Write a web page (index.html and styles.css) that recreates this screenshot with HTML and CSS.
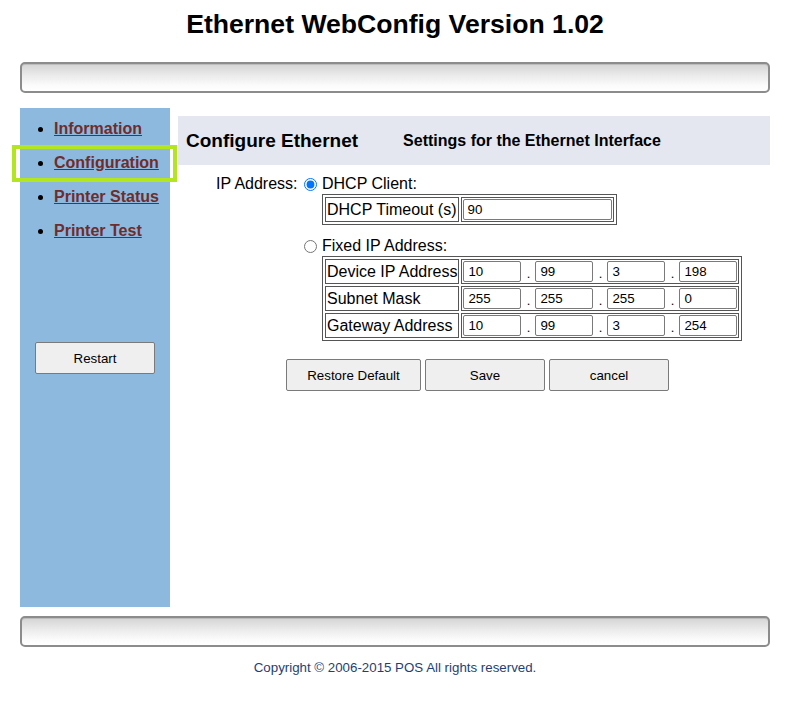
FILE: index.html
```html
<!DOCTYPE html>
<html>
<head>
<meta charset="utf-8">
<title>Ethernet WebConfig</title>
<link rel="stylesheet" href="styles.css">
</head>
<body>
<div class="page">
  <h1 class="title">Ethernet WebConfig Version 1.02</h1>
  <div class="bar bar-top"></div>
  <div class="main">
    <div class="sidebar">
      <ul class="nav">
        <li><a href="#">Information</a></li>
        <li><a href="#">Configuration</a></li>
        <li><a href="#">Printer Status</a></li>
        <li><a href="#">Printer Test</a></li>
      </ul>
      <div class="highlight"></div>
      <button class="btn btn-restart" type="button">Restart</button>
    </div>
    <div class="content">
      <div class="panel-head">
        <h2 class="panel-title">Configure Ethernet</h2>
        <span class="panel-sub">Settings for the Ethernet Interface</span>
      </div>
      <div class="form">
        <div class="form-label">IP Address:</div>
        <div class="form-options">
          <label class="opt"><input type="radio" name="ipmode" checked>DHCP Client:</label>
          <table class="cfg">
            <tr>
              <td class="lbl">DHCP Timeout (s)</td>
              <td><input class="txt txt-wide" type="text" value="90"></td>
            </tr>
          </table>
          <label class="opt opt-fixed"><input type="radio" name="ipmode">Fixed IP Address:</label>
          <table class="cfg">
            <tr>
              <td class="lbl">Device IP Address</td>
              <td class="ip"><input class="txt txt-oct" type="text" value="10"><span class="dot">.</span><input class="txt txt-oct" type="text" value="99"><span class="dot">.</span><input class="txt txt-oct" type="text" value="3"><span class="dot">.</span><input class="txt txt-oct" type="text" value="198"></td>
            </tr>
            <tr>
              <td class="lbl">Subnet Mask</td>
              <td class="ip"><input class="txt txt-oct" type="text" value="255"><span class="dot">.</span><input class="txt txt-oct" type="text" value="255"><span class="dot">.</span><input class="txt txt-oct" type="text" value="255"><span class="dot">.</span><input class="txt txt-oct" type="text" value="0"></td>
            </tr>
            <tr>
              <td class="lbl">Gateway Address</td>
              <td class="ip"><input class="txt txt-oct" type="text" value="10"><span class="dot">.</span><input class="txt txt-oct" type="text" value="99"><span class="dot">.</span><input class="txt txt-oct" type="text" value="3"><span class="dot">.</span><input class="txt txt-oct" type="text" value="254"></td>
            </tr>
          </table>
        </div>
      </div>
      <div class="actions">
        <button class="btn btn-restore" type="button">Restore Default</button>
        <button class="btn btn-act" type="button">Save</button>
        <button class="btn btn-act" type="button">cancel</button>
      </div>
    </div>
  </div>
  <div class="bar bar-bottom"></div>
  <p class="copyright">Copyright © 2006-2015 POS All rights reserved.</p>
</div>
</body>
</html>
```
FILE: styles.css
```css
html, body {
  margin: 0;
  padding: 0;
  background: #fff;
}
body {
  font-family: "Liberation Sans", Arial, sans-serif;
  color: #000;
}
.page {
  width: 750px;
  margin-left: 20px;
}
.title {
  margin: 9px 0 0;
  font-size: 26.6px;
  line-height: 30px;
  font-weight: bold;
  text-align: center;
}
.bar {
  box-sizing: border-box;
  height: 31px;
  border: 2px solid #8c8c8c;
  border-radius: 5px;
  background: linear-gradient(to bottom, #d4d4d4 0%, #ececec 45%, #fbfbfb 80%, #ffffff 100%);
  box-shadow: inset 0 1px 0 #bdbdbd;
}
.bar-top {
  margin-top: 23px;
}
.main {
  display: flex;
  margin-top: 15px;
  height: 499px;
}
.sidebar {
  position: relative;
  width: 150px;
  flex: none;
  background: #8db9de;
}
.nav {
  margin: 4px 0 0;
  padding-left: 34px;
}
.nav li {
  line-height: 34px;
  font-size: 16px;
}
.nav a {
  color: #6f2c2c;
  font-weight: bold;
  font-size: 16px;
  text-decoration: underline;
}
.highlight {
  position: absolute;
  left: -8px;
  top: 37px;
  width: 165px;
  height: 37px;
  box-sizing: border-box;
  border: 4px solid #b4e61f;
}
.btn {
  box-sizing: border-box;
  height: 32px;
  font-family: "Liberation Sans", Arial, sans-serif;
  font-size: 13.33px;
  color: #000;
  background: #efefef;
  border: 1px solid #7a7a7a;
  border-radius: 2px;
  padding: 0;
}
.btn-restart {
  display: block;
  width: 120px;
  margin: 94px 0 0 15px;
}
.content {
  flex: 1;
  margin-left: 8px;
  padding-top: 8px;
}
.panel-head {
  display: flex;
  align-items: center;
  height: 49px;
  background: #e4e7f0;
}
.panel-title {
  margin: 0 0 0 8px;
  font-size: 19px;
  font-weight: bold;
}
.panel-sub {
  margin-left: 45px;
  font-size: 16px;
  font-weight: bold;
}
.form {
  display: flex;
  margin: 10px 0 0 38px;
  font-size: 16px;
}
.form-label {
  width: 80px;
  margin-right: 8px;
  line-height: 18px;
  white-space: nowrap;
}
.form-options {
  display: flex;
  flex-direction: column;
  align-items: flex-start;
}
.opt {
  display: flex;
  align-items: center;
  line-height: 18px;
}
.opt input {
  width: 13px;
  height: 13px;
  margin: 0 5px 0 0;
}
.opt-fixed {
  margin-top: 12px;
}
.cfg {
  margin: 1px 0 0 18px;
  border: 1px solid #555;
  border-spacing: 2px;
}
.cfg td {
  border: 1px solid #555;
  padding: 1px;
  height: 21px;
  line-height: 18px;
  vertical-align: middle;
  white-space: nowrap;
}
.lbl {
  font-size: 16px;
}
.ip {
  padding-right: 2px;
}
.txt {
  box-sizing: border-box;
  height: 21px;
  margin: 0;
  padding: 1px 4px;
  font-family: "Liberation Sans", Arial, sans-serif;
  font-size: 13.33px;
  color: #000;
  border: 1px solid #7a7a7a;
  border-radius: 2px;
  background: #fff;
  vertical-align: middle;
}
.txt-wide {
  width: 149px;
}
.txt-oct {
  width: 58px;
}
.dot {
  display: inline-block;
  width: 14px;
  text-align: center;
  font-size: 13px;
  vertical-align: middle;
  position: relative;
  top: 2px;
}
.actions {
  display: flex;
  justify-content: center;
  gap: 4px;
  margin-top: 18px;
  padding-left: 7px;
}
.btn-restore {
  width: 135px;
}
.btn-act {
  width: 120px;
}
.bar-bottom {
  margin-top: 9px;
}
.copyright {
  margin: 13px 0 0;
  font-size: 13.3px;
  line-height: 15px;
  text-align: center;
  color: #1d3f78;
}
```
